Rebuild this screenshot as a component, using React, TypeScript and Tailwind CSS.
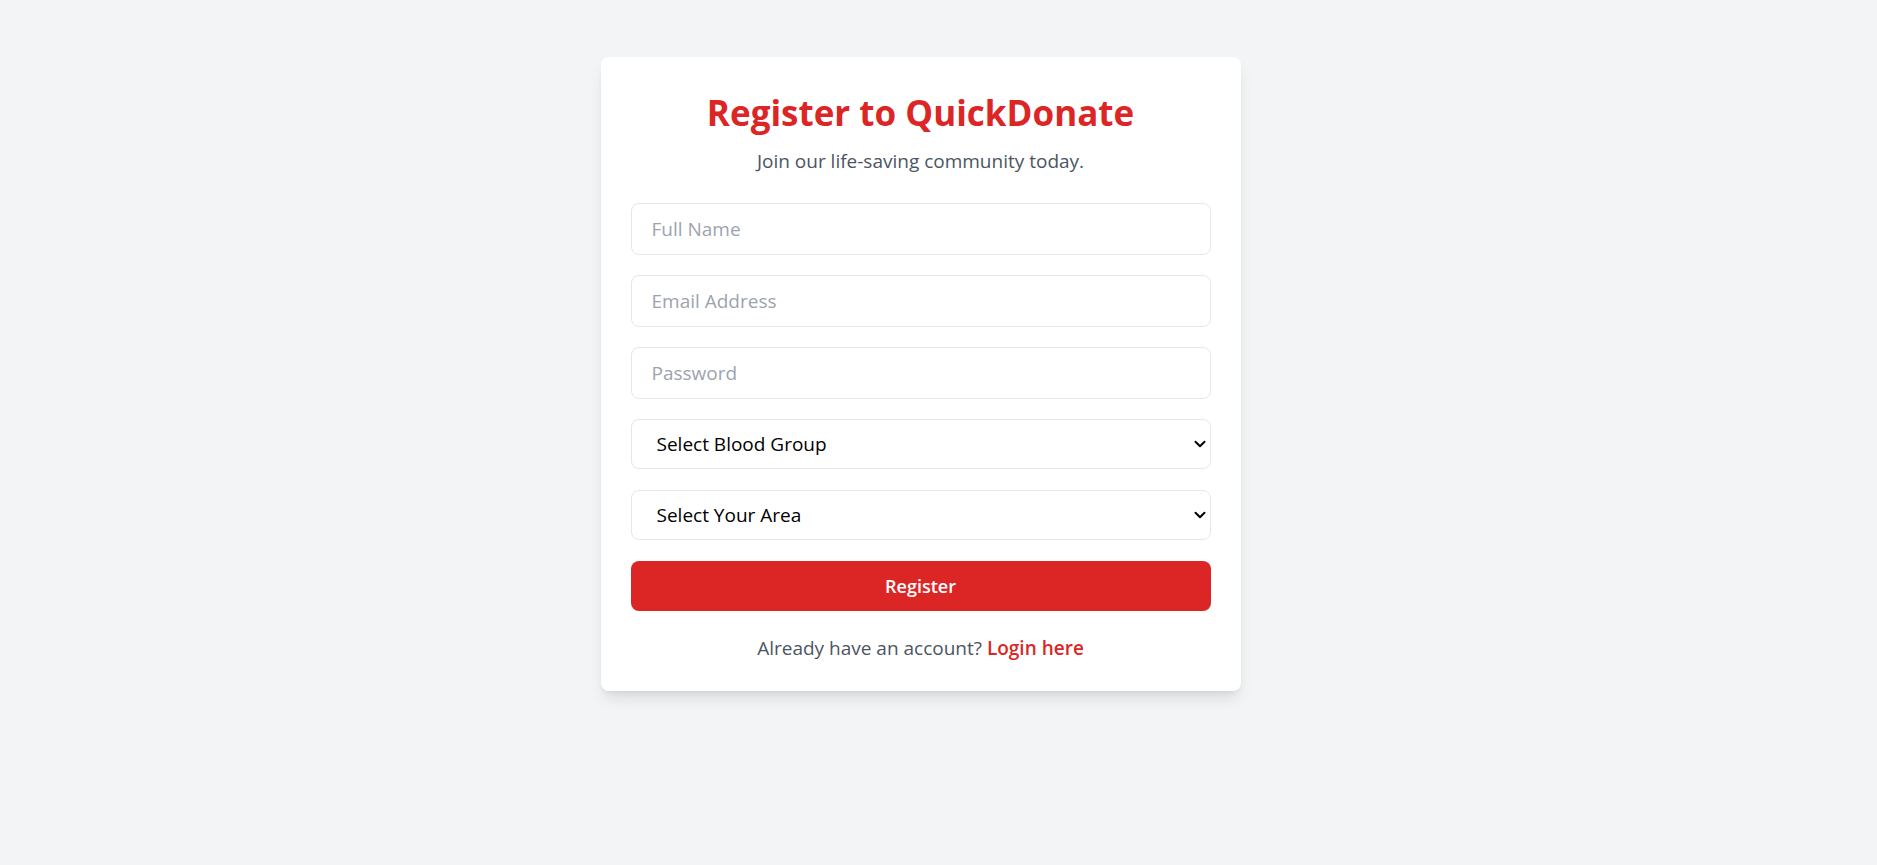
import React from "react";

const fieldClass =
  "w-full h-[52px] rounded-lg border border-[#e5e7eb] bg-white px-5 text-[19px] leading-7 text-black placeholder:text-[#9ca3af] outline-none";

const selectClass =
  "w-full h-[50px] appearance-none rounded-lg border border-[#e5e7eb] bg-white pl-[25px] pr-8 text-[19px] leading-7 text-black outline-none";

function Chevron() {
  return (
    <svg
      className="pointer-events-none absolute right-[5px] top-1/2 -translate-y-1/2"
      width="12"
      height="8"
      viewBox="0 0 12 8"
      fill="none"
    >
      <path d="M1.5 1.8 6 6.2 10.5 1.8" stroke="#000" strokeWidth="2" strokeLinecap="round" strokeLinejoin="round" />
    </svg>
  );
}

export default function App() {
  return (
    <main
      className="min-h-screen bg-[#f3f4f6] pt-[57px] pr-[36px] flex justify-center items-start"
      style={{ fontFamily: '"Open Sans", "Noto Sans", sans-serif' }}
    >
      <div className="w-[640px] bg-white rounded-lg shadow-lg px-[30px] pt-[34px] pb-[29px]">
        {/* Header */}
        <h1 className="text-center text-[35px] leading-[44px] font-bold text-[#dc2626]">Register to QuickDonate</h1>
        <p className="mt-3 text-center text-[19px] leading-7 text-[#4b5563]">Join our life-saving community today.</p>

        {/* Form */}
        <form className="mt-[28px] flex flex-col" onSubmit={(e) => e.preventDefault()}>
          <div className="flex flex-col gap-5">
            <input type="text" placeholder="Full Name" className={fieldClass} />
            <input type="email" placeholder="Email Address" className={fieldClass} />
            <input type="password" placeholder="Password" className={fieldClass} />
          </div>

          <div className="mt-5 flex flex-col gap-[21px]">
            <div className="relative">
              <select defaultValue="" className={selectClass}>
                <option value="">Select Blood Group</option>
                <option>A+</option>
                <option>A-</option>
                <option>B+</option>
                <option>B-</option>
                <option>AB+</option>
                <option>AB-</option>
                <option>O+</option>
                <option>O-</option>
              </select>
              <Chevron />
            </div>
            <div className="relative">
              <select defaultValue="" className={selectClass}>
                <option value="">Select Your Area</option>
              </select>
              <Chevron />
            </div>
            <button
              type="submit"
              className="w-full h-[50px] rounded-lg bg-[#dc2626] text-lg font-semibold text-white"
            >
              Register
            </button>
          </div>
        </form>

        <p className="mt-[23px] text-center text-[19px] leading-7 text-[#4b5563]">
          Already have an account?{" "}
          <a href="#" className="font-semibold text-[#dc2626]">
            Login here
          </a>
        </p>
      </div>
    </main>
  );
}
